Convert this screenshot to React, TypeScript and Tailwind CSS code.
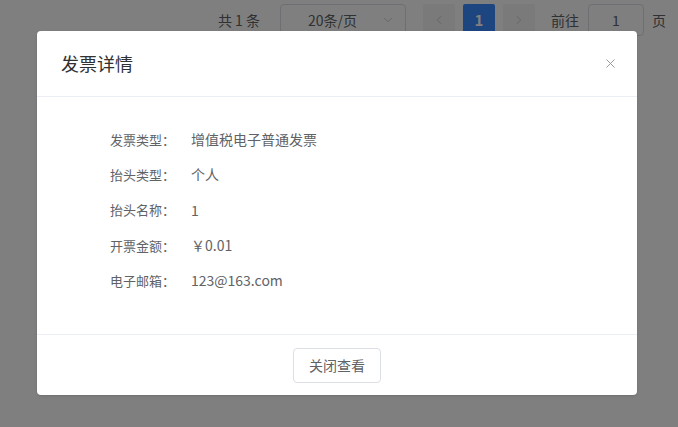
import { X, ChevronDown, ChevronLeft, ChevronRight } from "lucide-react";

const ROWS = [
  { label: "发票类型：", value: "增值税电子普通发票" },
  { label: "抬头类型：", value: "个人" },
  { label: "抬头名称：", value: "1" },
  { label: "开票金额：", value: "￥0.01" },
  { label: "电子邮箱：", value: "123@163.com" },
];

const FONT = { fontFamily: '"Noto Sans CJK SC", "Noto Sans", sans-serif' };

export default function App() {
  return (
    <div className="relative w-[678px] h-[427px] bg-white overflow-hidden" style={FONT}>
      {/* Pagination behind the mask */}
      <div className="flex items-center justify-end h-10 pr-[12px] text-[14px] text-[#606266]">
        <span className="mr-[20px]">共 1 条</span>
        <div className="flex items-center justify-between w-[126px] h-[32px] border border-[#dcdfe6] rounded-[4px] pl-[27px] pr-[10px] mr-[17px]">
          <span>20条/页</span>
          <ChevronDown size={14} strokeWidth={1.5} className="text-[#c0c4cc]" />
        </div>
        <div className="flex items-center gap-[8px]">
          <div className="w-[32px] h-[32px] bg-[#f4f4f5] rounded-[2px] flex items-center justify-center text-[#c0c4cc]">
            <ChevronLeft size={14} strokeWidth={1.5} />
          </div>
          <div className="w-[32px] h-[32px] bg-[#3b8bff] rounded-[2px] flex items-center justify-center text-white font-bold text-[15px]">
            1
          </div>
          <div className="w-[32px] h-[32px] bg-[#f4f4f5] rounded-[2px] flex items-center justify-center text-[#c0c4cc]">
            <ChevronRight size={14} strokeWidth={1.5} />
          </div>
        </div>
        <span className="ml-[16px] mr-[9px]">前往</span>
        <div className="w-[56px] h-[32px] border border-[#dcdfe6] rounded-[4px] flex items-center justify-center mr-[8px]">
          1
        </div>
        <span>页</span>
      </div>

      {/* Mask */}
      <div className="absolute inset-0 bg-black/50">
        <div className="ml-[37px] mt-[31px] w-[600px] bg-white rounded-[4px] shadow">
          <div className="flex items-center justify-between h-[66px] pl-[24px] pr-[19px] border-b border-[#ebeef5]">
            <span className="text-[18px] text-[#303133]">发票详情</span>
            <X size={15} strokeWidth={1.5} className="text-[#909399]" />
          </div>
          <div className="pt-[25px] pb-[36px] pl-[73px]">
            {ROWS.map((r) => (
              <div key={r.label} className="flex items-center h-[35.25px]">
                <span className="w-[81px] text-[13px] text-[#606266]">{r.label}</span>
                <span className="text-[14px] text-[#606266]">{r.value}</span>
              </div>
            ))}
          </div>
          <div className="flex justify-center items-center h-[61px] border-t border-[#ebeef5]">
            <button className="w-[88px] h-[35px] border border-[#dcdfe6] rounded-[4px] text-[14px] text-[#606266] bg-white">
              关闭查看
            </button>
          </div>
        </div>
      </div>
    </div>
  );
}
